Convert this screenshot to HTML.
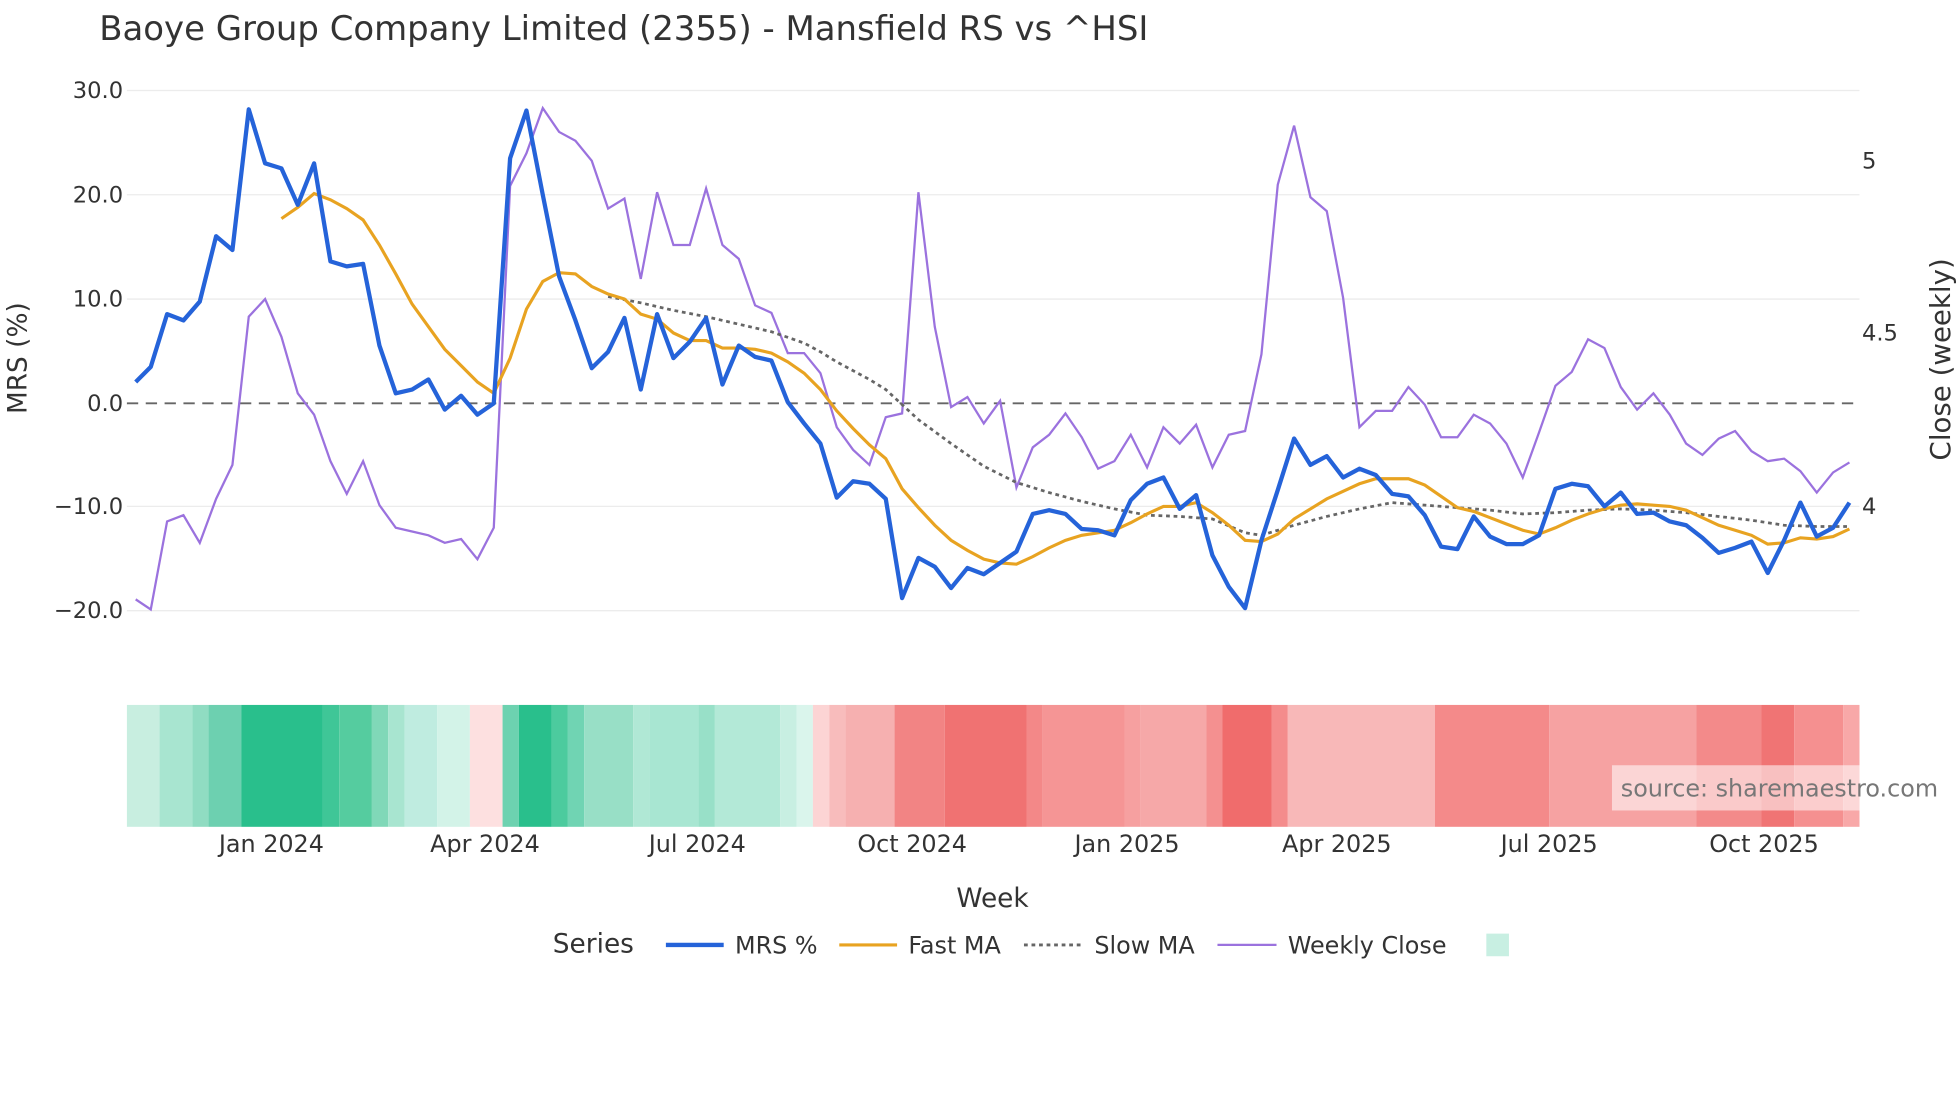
<!DOCTYPE html>
<html><head><meta charset="utf-8"><style>
html,body{margin:0;padding:0;background:#fff;}
svg{display:block;}
text{font-family:"DejaVu Sans","Liberation Sans",sans-serif;fill:#2a3f5f;}
</style></head><body>
<svg width="1960" height="1102" viewBox="0 0 1560 877" preserveAspectRatio="none" xmlns="http://www.w3.org/2000/svg">
<rect width="1560" height="877" fill="#fff"/>
<text x="79" y="32" font-size="27" style="fill:#333">Baoye Group Company Limited (2355) - Mansfield RS vs ^HSI</text>
<g stroke="#ececec" stroke-width="1">
<line x1="101" x2="1480" y1="72" y2="72"/><line x1="101" x2="1480" y1="155" y2="155"/>
<line x1="101" x2="1480" y1="238" y2="238"/><line x1="101" x2="1480" y1="403" y2="403"/>
<line x1="101" x2="1480" y1="486" y2="486"/>
</g>
<line x1="101" x2="1480" y1="321" y2="321" stroke="#666" stroke-width="1.5" stroke-dasharray="9,6"/>
<g font-size="18" text-anchor="end" style="fill:#333">
<text x="98" y="78" style="fill:#333">30.0</text><text x="98" y="161" style="fill:#333">20.0</text>
<text x="98" y="244" style="fill:#333">10.0</text><text x="98" y="327" style="fill:#333">0.0</text>
<text x="98" y="409" style="fill:#333">−10.0</text><text x="98" y="492" style="fill:#333">−20.0</text>
</g>
<g font-size="18" style="fill:#333">
<text x="1482" y="134" style="fill:#333">5</text><text x="1482" y="271" style="fill:#333">4.5</text><text x="1482" y="409" style="fill:#333">4</text>
</g>
<text transform="translate(21,285) rotate(-90)" font-size="21" text-anchor="middle" style="fill:#333">MRS (%)</text>
<text transform="translate(1552,286) rotate(-90)" font-size="22" text-anchor="middle" style="fill:#333">Close (weekly)</text>

<polyline fill="none" stroke="#9b72de" stroke-width="1.8" points="108,477 120,485 133,415 146,410 159,432 172,397 185,370 198,252 211,238 224,268 237,313 250,330 263,367 276,393 289,367 302,402 315,420 328,423 341,426 354,432 367,429 380,445 393,420 406,148 419,122 432,86 445,105 458,112 471,128 484,166 497,158 510,222 523,153 536,195 549,195 562,150 575,195 588,206 601,243 614,249 627,281 640,281 653,297 666,340 679,358 692,370 705,332 718,329 731,153 744,260 757,324 770,316 783,337 796,319 809,388 822,356 835,346 848,329 861,348 874,373 887,367 900,346 913,372 926,340 939,353 952,338 965,372 978,346 991,343 1004,282 1017,147 1030,100 1043,157 1056,168 1069,237 1082,340 1095,327 1108,327 1121,308 1134,322 1147,348 1160,348 1173,330 1186,337 1199,353 1212,380 1225,344 1238,307 1251,296 1264,270 1277,277 1290,308 1303,326 1316,313 1329,330 1342,353 1355,362 1368,349 1381,343 1394,359 1407,367 1420,365 1433,375 1446,392 1459,376 1472,368"/>
<polyline fill="none" stroke="#666" stroke-width="2.2" stroke-dasharray="3,3" points="484,236 510,241 536,247 562,252 588,258 614,264 640,273 653,280 666,288 692,302 705,310 718,322 731,334 757,353 783,371 809,384 835,392 861,399 887,405 913,410 939,411 965,413 991,424 1004,426 1030,418 1056,411 1082,405 1108,400 1134,402 1160,404 1186,406 1212,409 1238,408 1264,406 1290,405 1316,406 1342,408 1368,411 1394,414 1420,418 1446,419 1472,419"/>
<polyline fill="none" stroke="#e8a321" stroke-width="2.5" points="224,174 237,165 250,154 263,159 276,166 289,175 302,195 315,218 328,242 341,260 354,278 367,291 380,304 393,313 406,285 419,246 432,224 445,217 458,218 471,228 484,234 497,238 510,250 523,254 536,265 549,271 562,271 575,277 588,277 601,278 614,281 627,288 640,297 653,310 666,327 679,341 692,354 705,365 718,389 731,404 744,418 757,430 770,438 783,445 796,448 809,449 822,443 835,436 848,430 861,426 874,424 887,422 900,416 913,409 926,403 939,403 952,400 965,408 978,418 991,430 1004,431 1017,425 1030,413 1043,405 1056,397 1069,391 1082,385 1095,381 1108,381 1121,381 1134,386 1147,395 1160,404 1173,407 1186,412 1199,417 1212,422 1225,425 1238,420 1251,414 1264,409 1277,405 1290,402 1303,401 1316,402 1329,403 1342,406 1355,412 1368,418 1381,422 1394,426 1407,433 1420,432 1433,428 1446,429 1459,427 1472,421"/>
<polyline fill="none" stroke="#2563d9" stroke-width="3.4" stroke-linejoin="round" points="108,304 120,292 133,250 146,255 159,240 172,188 185,199 198,87 211,130 224,134 237,163 250,130 263,208 276,212 289,210 302,275 315,313 328,310 341,302 354,326 367,315 380,330 393,321 406,126 419,88 432,155 445,220 458,255 471,293 484,280 497,253 510,310 523,250 536,285 549,272 562,253 575,306 588,275 601,284 614,287 627,320 640,337 653,353 666,396 679,383 692,385 705,397 718,476 731,444 744,451 757,468 770,452 783,457 796,448 809,439 822,409 835,406 848,409 861,421 874,422 887,426 900,398 913,385 926,380 939,405 952,394 965,442 978,467 991,484 1004,430 1017,390 1030,349 1043,370 1056,363 1069,380 1082,373 1095,378 1108,393 1121,395 1134,410 1147,435 1160,437 1173,411 1186,427 1199,433 1212,433 1225,426 1238,389 1251,385 1264,387 1277,403 1290,392 1303,409 1316,408 1329,415 1342,418 1355,428 1368,440 1381,436 1394,431 1407,456 1420,430 1433,400 1446,427 1459,420 1472,400"/>

<g>
<rect x="101" y="561" width="26" height="97" fill="#c8eee0"/>
<rect x="127" y="561" width="26" height="97" fill="#a8e5d0"/>
<rect x="153" y="561" width="13" height="97" fill="#90dcc2"/>
<rect x="166" y="561" width="26" height="97" fill="#6dd0b0"/>
<rect x="192" y="561" width="65" height="97" fill="#29bf8c"/>
<rect x="257" y="561" width="13" height="97" fill="#3fc697"/>
<rect x="270" y="561" width="26" height="97" fill="#55cc9f"/>
<rect x="296" y="561" width="13" height="97" fill="#80d8b8"/>
<rect x="309" y="561" width="13" height="97" fill="#a8e5d0"/>
<rect x="322" y="561" width="26" height="97" fill="#bfece0"/>
<rect x="348" y="561" width="26" height="97" fill="#d3f3e8"/>
<rect x="374" y="561" width="26" height="97" fill="#fde0e0"/>
<rect x="400" y="561" width="13" height="97" fill="#6dd2b0"/>
<rect x="413" y="561" width="26" height="97" fill="#29bf8c"/>
<rect x="439" y="561" width="13" height="97" fill="#4ccb9e"/>
<rect x="452" y="561" width="13" height="97" fill="#70d4b3"/>
<rect x="465" y="561" width="39" height="97" fill="#98dfc6"/>
<rect x="504" y="561" width="13" height="97" fill="#b0e8d5"/>
<rect x="517" y="561" width="39" height="97" fill="#a8e6d2"/>
<rect x="556" y="561" width="13" height="97" fill="#98e0c8"/>
<rect x="569" y="561" width="52" height="97" fill="#b3e9d7"/>
<rect x="621" y="561" width="13" height="97" fill="#c8efe2"/>
<rect x="634" y="561" width="13" height="97" fill="#daf5ec"/>
<rect x="647" y="561" width="13" height="97" fill="#fcd4d4"/>
<rect x="660" y="561" width="13" height="97" fill="#f8bcbc"/>
<rect x="673" y="561" width="39" height="97" fill="#f6b0b0"/>
<rect x="712" y="561" width="40" height="97" fill="#f28484"/>
<rect x="752" y="561" width="65" height="97" fill="#f07272"/>
<rect x="817" y="561" width="13" height="97" fill="#f38888"/>
<rect x="830" y="561" width="65" height="97" fill="#f59595"/>
<rect x="895" y="561" width="13" height="97" fill="#f6a0a0"/>
<rect x="908" y="561" width="52" height="97" fill="#f6a8a8"/>
<rect x="960" y="561" width="13" height="97" fill="#f49090"/>
<rect x="973" y="561" width="39" height="97" fill="#f06c6c"/>
<rect x="1012" y="561" width="13" height="97" fill="#f48c8c"/>
<rect x="1025" y="561" width="117" height="97" fill="#f8b8b8"/>
<rect x="1142" y="561" width="91" height="97" fill="#f48a8a"/>
<rect x="1233" y="561" width="117" height="97" fill="#f6a2a2"/>
<rect x="1350" y="561" width="52" height="97" fill="#f38a8a"/>
<rect x="1402" y="561" width="26" height="97" fill="#f07474"/>
<rect x="1428" y="561" width="39" height="97" fill="#f59090"/>
<rect x="1467" y="561" width="13" height="97" fill="#f8a8a8"/>
</g>
<rect x="1283" y="609" width="197" height="36" fill="#fff" fill-opacity="0.55"/>
<text x="1290" y="634" font-size="19" style="fill:#777">source: sharemaestro.com</text>

<g font-size="19" text-anchor="middle" style="fill:#333">
<text x="216" y="678" style="fill:#333">Jan 2024</text><text x="386" y="678" style="fill:#333">Apr 2024</text>
<text x="555" y="678" style="fill:#333">Jul 2024</text><text x="726" y="678" style="fill:#333">Oct 2024</text>
<text x="897" y="678" style="fill:#333">Jan 2025</text><text x="1064" y="678" style="fill:#333">Apr 2025</text>
<text x="1233" y="678" style="fill:#333">Jul 2025</text><text x="1404" y="678" style="fill:#333">Oct 2025</text>
</g>
<text x="790" y="722" font-size="21" text-anchor="middle" style="fill:#333">Week</text>
<text x="440" y="758" font-size="21" style="fill:#333">Series</text>
<line x1="530" x2="576" y1="752" y2="752" stroke="#2563d9" stroke-width="3.4"/>
<text x="585" y="759" font-size="19" style="fill:#333">MRS %</text>
<line x1="668" x2="714" y1="752" y2="752" stroke="#e8a321" stroke-width="2.5"/>
<text x="723" y="759" font-size="19" style="fill:#333">Fast MA</text>
<line x1="815" x2="860" y1="752" y2="752" stroke="#666" stroke-width="2.2" stroke-dasharray="3,3"/>
<text x="871" y="759" font-size="19" style="fill:#333">Slow MA</text>
<line x1="969" x2="1016" y1="752" y2="752" stroke="#9b72de" stroke-width="1.8"/>
<text x="1025" y="759" font-size="19" style="fill:#333">Weekly Close</text>
<rect x="1183" y="743" width="18" height="18" fill="#c8efe2"/>
</svg>
</body></html>
